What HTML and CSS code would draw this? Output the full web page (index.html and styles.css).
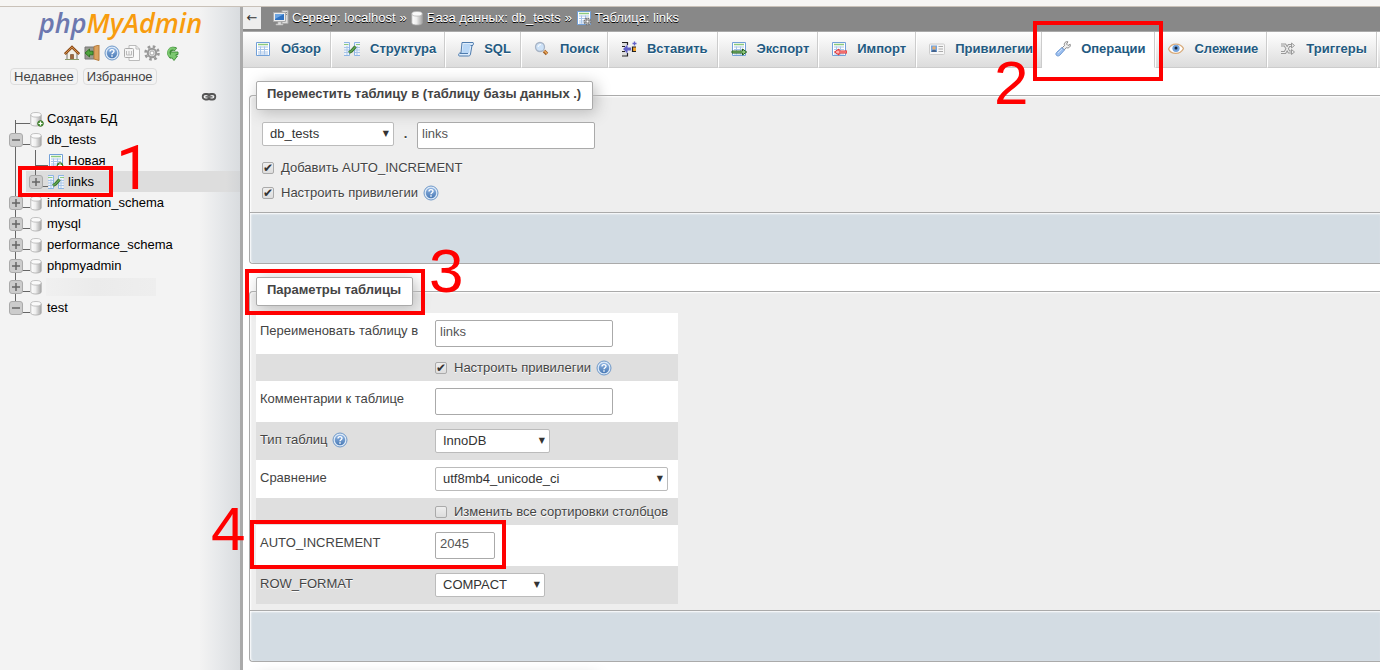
FILE: index.html
```html
<!DOCTYPE html>
<html lang="ru">
<head>
<meta charset="utf-8">
<title>phpMyAdmin</title>
<link rel="stylesheet" href="styles.css">
</head>
<body>
<svg class="sprite" aria-hidden="true">
  <defs>
    <linearGradient id="cyl" x1="0" x2="1"><stop offset="0" stop-color="#fff"/><stop offset=".45" stop-color="#eee"/><stop offset="1" stop-color="#a5a5a5"/></linearGradient>
    <linearGradient id="blue" x1="0" y1="0" x2="0" y2="1"><stop offset="0" stop-color="#8fb4e2"/><stop offset="1" stop-color="#4a7ab5"/></linearGradient>
  </defs>
  <symbol id="home" viewBox="0 0 16 16"><path d="M3 8v6.500h10V8L8 3z" fill="#f2efe6" stroke="#77756c"/><path d="M.8 9 8 2l7.200 7" fill="none" stroke="#8c4b16" stroke-width="2.600"/><path d="M1.300 8.700 8 2.200l6.700 6.500" fill="none" stroke="#d9934e" stroke-width="1"/><path d="M6.500 9.500h3v5h-3z" fill="#a0683a" stroke="#6d4423" stroke-width=".6"/><path d="M1 14.500h14" stroke="#8a9a6b"/></symbol>
  <symbol id="exit" viewBox="0 0 16 16"><path d="M1 2h9v12H1z" fill="#9a9a92" stroke="#777"/><path d="M10 1.500 15 0v15.500l-5-1.500z" fill="#dca25f" stroke="#b67c3e"/><path d="M9 6.200H5.500V4L1 8l4.500 4V9.800H9z" fill="#4ea43c" stroke="#236b18" stroke-width=".8"/></symbol>
  <symbol id="help" viewBox="0 0 16 16"><circle cx="8" cy="8" r="7" fill="#dbe8f6" stroke="#6f98c8"/><circle cx="8" cy="8" r="5.200" fill="url(#blue)"/><path d="M6 6.500C6 4 10 4 10 6.300 10 7.800 8 7.700 8 9.300M8 10.300v1.500" fill="none" stroke="#fff" stroke-width="1.400"/></symbol>
  <symbol id="docs" viewBox="0 0 16 16"><path d="M5 .5h7l3.500 3.500v11.500H5z" fill="#fafafa" stroke="#bbb"/><path d="M12 .5v3.500h3.500" fill="none" stroke="#bbb"/><rect x=".5" y="3.500" width="9" height="9" rx="1" fill="#f4f4f4" stroke="#aaa"/><path d="M2.500 6v4h5V6M5 6v4" stroke="#bbb" fill="none"/></symbol>
  <symbol id="gear" viewBox="0 0 16 16"><circle cx="8" cy="8" r="6.500" fill="none" stroke="#999" stroke-width="2.600" stroke-dasharray="2.600 2.500"/><circle cx="8" cy="8" r="4.200" fill="#ddd" stroke="#999" stroke-width="2"/><circle cx="8" cy="8" r="2" fill="#fff" stroke="#aaa"/></symbol>
  <symbol id="reload" viewBox="0 0 16 16"><path d="M12 4.500A4.300 4.300 0 1 0 8 12" fill="none" stroke="#3d8b37" stroke-width="4"/><path d="M6.500 7h7.500v2.500h-2v1.500h1.500L10 15.500 6.500 11z" fill="#7cc870" stroke="#3d8b37" stroke-width=".9"/><path d="M11.500 4.500A4.200 4.200 0 1 0 8 11.700" fill="none" stroke="#7cc870" stroke-width="2.200"/></symbol>
  <symbol id="chain" viewBox="0 0 16 16"><rect x="1.700" y="5" width="7" height="5.500" rx="2.700" fill="none" stroke="#555" stroke-width="1.800"/><rect x="7.300" y="5" width="7" height="5.500" rx="2.700" fill="none" stroke="#555" stroke-width="1.800"/><path d="M4.500 7.700h7" stroke="#777" stroke-width="1.800"/></symbol>
  <symbol id="db" viewBox="0 0 16 16"><path d="M.8 4v9c0 2.700 10.400 2.700 10.400 0V4z" fill="url(#cyl)" stroke="#aaa" stroke-width=".8"/><ellipse cx="6" cy="3.800" rx="5.200" ry="2.300" fill="#fafafa" stroke="#b5b5b5" stroke-width=".8"/></symbol>
  <symbol id="dbnew" viewBox="0 0 16 16"><use href="#db" width="16" height="16"/><circle cx="10.500" cy="12.500" r="2.800" fill="#4f9a3b" stroke="#397327"/><path d="M8.500 12.500h4m-2-2v4" stroke="#fff" stroke-width="1.200"/></symbol>
  <symbol id="table" viewBox="0 0 16 16"><path d="M1.500 1.500h13v13h-13z" fill="#fff" stroke="#72a0d8"/><path d="M3 3.500h10" stroke="#8cc97c" stroke-width="1.500"/><path d="M3 6h10M3 8.500h10M3 11h10M3 13h10M5.500 5.500v8M9.500 5.500v8" stroke="#a9c5e8"/></symbol>
  <symbol id="tablenew" viewBox="0 0 16 16"><use href="#table" width="16" height="16"/><circle cx="12" cy="12.500" r="2.800" fill="#4f9a3b" stroke="#397327"/><path d="M10 12.500h4m-2-2v4" stroke="#fff" stroke-width="1.200"/></symbol>
  <symbol id="tablegear" viewBox="0 0 16 16"><use href="#table" width="16" height="16"/><circle cx="11.500" cy="11.500" r="3" fill="#eee" stroke="#777" stroke-width="2" stroke-dasharray="1.600 .7"/><circle cx="11.500" cy="11.500" r="1.500" fill="#fff" stroke="#777"/></symbol>
  <symbol id="struct" viewBox="0 0 16 16"><path d="M.5 1.500h5v13h-5zM10.500 1.500h5v13h-5z" fill="#eef4fc"/><path d="M0 1.500h5.500v13H0M16 1.500h-5.500v13H16" fill="none" stroke="#8db4e4"/><path d="M0 3.500h4.500M12 3.500h4" stroke="#8cc97c"/><path d="M0 6.500h5M0 9h5M0 11.500h5M11 6.500h5M11 9h5M11 11.500h5M3 5v9M13 5v9" stroke="#a9c5e8"/><path d="m5 11.500 2.500-1.500 4-4.500" fill="none" stroke="#2f6c2a" stroke-width="3.200"/><path d="m5 11.500 2.500-1.500 4-4.500" fill="none" stroke="#64a650" stroke-width="1.500"/></symbol>
  <symbol id="server" viewBox="0 0 16 16"><path d="M9 .5h6v13H9z" fill="#ddd" stroke="#aaa"/><path d="M11 2.500h3M11 4.500h3" stroke="#888"/><path d="M.5 2.500h12v9H.5z" fill="#eee" stroke="#aaa"/><path d="M2 4h9v6H2z" fill="#2f72c2"/><path d="M2 4h9L2 9z" fill="#6da5e2"/><path d="M5 12h3v2h2v1H3v-1h2z" fill="#ddd" stroke="#bbb" stroke-width=".6"/></symbol>
  <symbol id="sql" viewBox="0 0 16 16"><path d="M4 1.500h11c.8 0 .8 3-1 3L12.500 13c-.2 1.500-1 2-2 2H1.300c-1.200 0-.8-3 .7-3h1z" fill="#ddecfb" stroke="#4f7cae"/><path d="M5.500 3h7L11 12H4z" fill="#b9d7f6"/><path d="M12.500 4.500H15M2 12.500h8" stroke="#4f7cae"/></symbol>
  <symbol id="search" viewBox="0 0 16 16"><path d="m10 10 3 3" stroke="#a06026" stroke-width="3.500"/><path d="m10.500 10 2.500 2.500" stroke="#eda95b" stroke-width="1.500"/><circle cx="6" cy="6" r="4.500" fill="#cde2f8" stroke="#a8b4c5" stroke-width="1.300"/><path d="M4 6a3 3 0 0 1 3-2.500" fill="none" stroke="#fff"/></symbol>
  <symbol id="insert" viewBox="0 0 16 16"><path d="M1 1h5v4H1zM1 10.500h5v4H1z" fill="#ddd"/><path d="M1 1.500h5.500V4M1 5.500h3M1 10.500h3M6.500 12v3H1" fill="none" stroke="#222" stroke-width="1.200"/><path d="M2 8 6.500 3.500v3H10v3H6.500v3z" fill="#6262c8"/><path d="M11.500 6h3.500v4h-3.500z" fill="#f5a52b"/><path d="M15 6h-3.500v4.500H15" fill="none" stroke="#222" stroke-width="1.200"/><path d="M13.500.5v4m-2-2h4" stroke="#6262c8" stroke-width="1.300"/></symbol>
  <symbol id="export" viewBox="0 0 16 16"><use href="#table" width="16" height="16"/><path d="M1 10h10.500V8l4.200 3-4.200 3v-2H1z" fill="#8fca7f" stroke="#245f1d" stroke-width="1"/></symbol>
  <symbol id="import" viewBox="0 0 16 16"><use href="#table" width="16" height="16"/><path d="M16 10H8V8l-4.500 3L8 14v-2h8z" fill="#ffb0b0" stroke="#e22b2b" stroke-width="1"/></symbol>
  <symbol id="rights" viewBox="0 0 16 16"><rect x=".5" y="3" width="15" height="10.500" rx="1" fill="#f7f7f7" stroke="#ccc"/><path d="M2 4.500h6V11H2z" fill="#74a5de"/><circle cx="5" cy="7" r="1.800" fill="#e4ae74"/><path d="M2.500 11c0-3 5-3 5 0" fill="#44628a"/><path d="M9.500 5.500h4.500M9.500 8h4.500M9.500 10.500h4.500" stroke="#aaa"/></symbol>
  <symbol id="wrench" viewBox="0 0 16 16"><path d="m7 7 2.500-2.500C8.500 2 11 0 13 .8L11.500 3l1.500 1.500 2.200-1.200c.8 2.200-1.500 4.300-3.700 3.400L9 9z" fill="#eee" stroke="#888"/><path d="m7 6.500 2.500 2.500-5 5.500C2 16-.2 13.500 1.500 11.500z" fill="#9cc0f0" stroke="#6f99d2"/><path d="m3 12 4-4" stroke="#cfe1fa"/></symbol>
  <symbol id="eye" viewBox="0 0 16 16"><path d="M.5 8C3.500 1.500 12 1.500 15.500 7.500 12 14 3.500 14 .5 8z" fill="#fff" stroke="#d9ac7c" stroke-width="1.300"/><circle cx="8" cy="7.300" r="3.600" fill="#73a3dc"/><circle cx="8" cy="7" r="1.500" fill="#182638"/></symbol>
  <symbol id="trigger" viewBox="0 0 16 16"><path d="M1 4h4l4 7h3M1 11.500h4L9 4.500h3" fill="none" stroke="#999" stroke-width="3.200"/><path d="M1 4h4l4 7h3M1 11.500h4L9 4.500h3" fill="none" stroke="#eee" stroke-width="1.200"/><path d="m11.500 2 3 2.500-3 2.500zm0 6.500 3 2.500-3 2.500z" fill="#eee" stroke="#999"/></symbol>
  <symbol id="box" viewBox="0 0 14 14"><rect x=".5" y=".5" width="13" height="13" rx="2.500" fill="#ccc" stroke="#aaa"/><path d="M3 7h8" stroke="#666" stroke-width="1.500"/></symbol>
  <symbol id="br-start" viewBox="0 0 21 21"><path d="M6.500 12v9M6.500 15.500H21" fill="none" stroke="#666"/></symbol>
  <symbol id="br-line" viewBox="0 0 21 21"><path d="M6.500 0v21" stroke="#666"/></symbol>
  <symbol id="br-item" viewBox="0 0 21 21"><path d="M6.500 0v21M6.500 15.500H20" fill="none" stroke="#666"/></symbol>
  <symbol id="br-minus" viewBox="0 0 21 21"><path d="M6.500 0v21M13 15.500h8" stroke="#666"/><use href="#box" y="4" width="14" height="14"/></symbol>
  <symbol id="br-plus" viewBox="0 0 21 21"><use href="#br-minus" width="21" height="21"/><path d="M7 7v8" stroke="#666" stroke-width="1.500"/></symbol>
  <symbol id="br-pluslast" viewBox="0 0 21 21"><path d="M6.500 0v8M13 15.500h8" stroke="#666"/><use href="#box" y="4" width="14" height="14"/><path d="M7 7v8" stroke="#666" stroke-width="1.500"/></symbol>
  <symbol id="br-last" viewBox="0 0 21 21"><path d="M6.500 0v8M13 15.500h8" stroke="#666"/><use href="#box" y="4" width="14" height="14"/></symbol>
</svg>

<div class="topstrip"></div>
<div class="app">
  <nav class="nav">
    <div class="logo"><span class="logo-php">php</span><span class="logo-my">MyAdmin</span></div>
    <div class="tools">
      <a href="#" aria-label="Домой"><svg class="icon"><use href="#home"/></svg></a>
      <a href="#" aria-label="Выход"><svg class="icon"><use href="#exit"/></svg></a>
      <a href="#" aria-label="Справка"><svg class="icon"><use href="#help"/></svg></a>
      <a href="#" aria-label="Документация"><svg class="icon"><use href="#docs"/></svg></a>
      <a href="#" aria-label="Настройки"><svg class="icon"><use href="#gear"/></svg></a>
      <a href="#" aria-label="Обновить"><svg class="icon"><use href="#reload"/></svg></a>
    </div>
    <div class="quick"><button type="button">Недавнее</button><button type="button">Избранное</button></div>
    <div class="linker"><a href="#" aria-label="Связать с панелью"><svg class="icon"><use href="#chain"/></svg></a></div>
    <ul class="tree">
      <li><svg class="branch"><use href="#br-start"/></svg><svg class="icon"><use href="#dbnew"/></svg><a href="#">Создать БД</a></li>
      <li><svg class="branch"><use href="#br-minus"/></svg><svg class="icon"><use href="#db"/></svg><a href="#">db_tests</a></li>
      <li><svg class="trunk"><use href="#br-line" width="21" height="21"/></svg><div class="child"><svg class="branch"><use href="#br-item" width="21" height="21"/></svg><svg class="icon"><use href="#tablenew"/></svg><a href="#">Новая</a></div></li>
      <li><svg class="trunk"><use href="#br-line" width="21" height="21"/></svg><div class="child current"><svg class="branch"><use href="#br-pluslast" width="21" height="21"/></svg><svg class="icon"><use href="#struct"/></svg><a href="#">links</a></div></li>
      <li><svg class="branch"><use href="#br-plus"/></svg><svg class="icon"><use href="#db"/></svg><a href="#">information_schema</a></li>
      <li><svg class="branch"><use href="#br-plus"/></svg><svg class="icon"><use href="#db"/></svg><a href="#">mysql</a></li>
      <li><svg class="branch"><use href="#br-plus"/></svg><svg class="icon"><use href="#db"/></svg><a href="#">performance_schema</a></li>
      <li><svg class="branch"><use href="#br-plus"/></svg><svg class="icon"><use href="#db"/></svg><a href="#">phpmyadmin</a></li>
      <li><svg class="branch"><use href="#br-plus"/></svg><svg class="icon"><use href="#db"/></svg><span class="hidden-name"></span></li>
      <li><svg class="branch"><use href="#br-last"/></svg><svg class="icon"><use href="#db"/></svg><a href="#">test</a></li>
    </ul>
  </nav>

  <main class="main">
    <div class="crumbs">
      <button type="button" class="back" aria-label="Скрыть панель">←</button>
      <svg class="icon"><use href="#server"/></svg><a href="#">Сервер: localhost</a><span class="sep">»</span>
      <svg class="icon crumb-db"><use href="#db" width="16" height="16"/></svg><a href="#">База данных: db_tests</a><span class="sep">»</span>
      <svg class="icon"><use href="#tablegear"/></svg><a href="#">Таблица: links</a>
    </div>
    <div class="tabs">
      <a href="#" class="tab"><svg class="icon"><use href="#table"/></svg>Обзор</a>
      <a href="#" class="tab"><svg class="icon"><use href="#struct"/></svg>Структура</a>
      <a href="#" class="tab"><svg class="icon"><use href="#sql"/></svg>SQL</a>
      <a href="#" class="tab"><svg class="icon"><use href="#search"/></svg>Поиск</a>
      <a href="#" class="tab"><svg class="icon"><use href="#insert"/></svg>Вставить</a>
      <a href="#" class="tab"><svg class="icon"><use href="#export"/></svg>Экспорт</a>
      <a href="#" class="tab"><svg class="icon"><use href="#import"/></svg>Импорт</a>
      <a href="#" class="tab"><svg class="icon"><use href="#rights"/></svg>Привилегии</a>
      <a href="#" class="tab active"><svg class="icon"><use href="#wrench"/></svg>Операции</a>
      <a href="#" class="tab"><svg class="icon"><use href="#eye"/></svg>Слежение</a>
      <a href="#" class="tab"><svg class="icon"><use href="#trigger"/></svg>Триггеры</a>
      <span class="tab-rest"></span>
    </div>

    <form>
      <fieldset class="panel">
        <legend>Переместить таблицу в (таблицу базы данных .)</legend>
        <div class="move">
          <div class="move-row">
            <span class="pick pick-db"><select aria-label="База данных"><option>db_tests</option></select></span>
            <b class="dot">.</b>
            <input type="text" class="text" value="links" aria-label="Таблица">
          </div>
          <div class="check-row"><input type="checkbox" id="ai" checked><label for="ai">Добавить AUTO_INCREMENT</label></div>
          <div class="check-row"><input type="checkbox" id="pr" checked><label for="pr">Настроить привилегии</label><svg class="icon"><use href="#help"/></svg></div>
        </div>
        <div class="panel-foot"></div>
      </fieldset>
    </form>

    <form>
      <fieldset class="panel">
        <legend>Параметры таблицы</legend>
        <table class="options">
          <tr><td><label for="name">Переименовать таблицу в</label></td><td><input type="text" class="text" id="name" value="links"></td></tr>
          <tr><td></td><td><div class="check-cell"><input type="checkbox" id="pr2" checked><label for="pr2">Настроить привилегии</label><svg class="icon"><use href="#help"/></svg></div></td></tr>
          <tr><td><label for="comment">Комментарии к таблице</label></td><td><input type="text" class="text" id="comment"></td></tr>
          <tr><td><div class="label-help"><label for="engine">Тип таблиц</label><svg class="icon"><use href="#help"/></svg></div></td><td><span class="pick pick-engine"><select id="engine"><option>InnoDB</option></select></span></td></tr>
          <tr><td><label for="coll">Сравнение</label></td><td><span class="pick pick-coll"><select id="coll"><option>utf8mb4_unicode_ci</option></select></span></td></tr>
          <tr><td></td><td><div class="check-cell"><input type="checkbox" id="cols"><label for="cols">Изменить все сортировки столбцов</label></div></td></tr>
          <tr><td><label for="inc">AUTO_INCREMENT</label></td><td><input type="text" class="text short" id="inc" value="2045"></td></tr>
          <tr><td><label for="fmt">ROW_FORMAT</label></td><td><span class="pick pick-format"><select id="fmt"><option>COMPACT</option></select></span></td></tr>
        </table>
        <div class="panel-foot"></div>
      </fieldset>
    </form>
    <div class="next-legend"></div>
  </main>
</div>

<div class="mark mark-1"></div><span class="digit digit-1">1</span>
<div class="mark mark-2"></div><span class="digit digit-2">2</span>
<div class="mark mark-3"></div><span class="digit digit-3">3</span>
<div class="mark mark-4"></div><span class="digit digit-4">4</span>
</body>
</html>
```

FILE: styles.css
```css
* { box-sizing: border-box; }
body {
  margin: 0;
  height: 100vh;
  display: flex;
  flex-direction: column;
  overflow: hidden;
  position: relative;
  background: #fff;
  color: #444;
  font: 13px/16px "Liberation Sans", Arial, sans-serif;
}
a { color: inherit; text-decoration: none; }
button, input, select { font: inherit; color: inherit; margin: 0; }
.sprite { position: absolute; width: 0; height: 0; }
.icon { width: 16px; height: 16px; flex: none; display: block; }
.topstrip { flex: none; height: 7px; background: #f6f5f3; border-bottom: 1px solid #c9c1b8; }
.app { flex: 1; min-height: 0; display: flex; }

/* navigation */
.nav {
  flex: none;
  width: 243px;
  border-right: 3px solid #aaa;
  background: linear-gradient(to right, #f3f3f3 200px, #e6e8ea 220px, #d9dcdf 240px);
}
.logo {
  padding: 1px 0 0 39px;
  font: italic 600 27px/30px "Open Sans", "Noto Sans", sans-serif;
}
.logo-php { color: #6c78af; }
.logo-my { color: #f89c0e; }
.tools { display: flex; gap: 4px; padding: 7px 0 0 64px; }
.quick { display: flex; gap: 5px; padding: 7px 0 0 10px; }
.quick button {
  padding: 0 3px;
  height: 17px;
  line-height: 14px;
  background: #f3f3f3;
  border: 1px solid #ddd;
  border-radius: 4px;
}
.linker { display: flex; justify-content: flex-end; padding: 4px 23px 0 0; }
.tree { list-style: none; margin: 0; padding: 3px 0 0 9px; color: #000; }
.tree li { display: flex; align-items: center; height: 21px; }
.tree a { padding-left: 1px; white-space: nowrap; }
.branch { flex: none; width: 21px; height: 21px; }
.trunk { flex: none; width: 17px; height: 21px; }
.child { flex: 1; display: flex; align-items: center; height: 21px; padding-left: 3px; }
.child .branch { width: 19px; }
.child a { padding-left: 4px; }
.current { background: linear-gradient(to right, #ddd 200px, #d3d5d7); }
.hidden-name { width: 110px; height: 18px; background: linear-gradient(to right, #f0f0f0, #ebebeb 50px, #eee); }

/* main column */
.main { flex: 1; min-width: 0; overflow: hidden; }
.crumbs {
  display: flex;
  align-items: center;
  height: 25px;
  padding-bottom: 2px;
  background: #888;
  border-bottom: 1px solid #aaa;
  color: #fff;
  text-shadow: 0 1px 0 #000;
}
.back {
  width: 18px;
  height: 22px;
  margin-right: 12px;
  padding: 0;
  border: 0;
  background: #eee;
  color: #333;
  font-family: "DejaVu Sans", sans-serif;
}
.crumbs a { padding-left: 3px; }
.sep { padding: 0 4px; }
.crumb-db { width: 13px; }
.tabs { display: flex; height: 36px; overflow: hidden; }
.tab {
  flex: none;
  display: flex;
  align-items: center;
  gap: 10px;
  padding: 0 9px 2px 12px;
  border-left: 1px solid #fff;
  border-right: 1px solid #ccc;
  border-bottom: 1px solid #ccc;
  background: linear-gradient(#fff, #dcdcdc);
  color: #235a81;
  font-weight: bold;
  text-shadow: 0 1px 0 #fff;
}
.tab:nth-child(even) { padding-right: 8px; }
.tab:first-child { border-left: 0; }
.tab.active { background: #fff; border-bottom-color: #fff; }
.tab-rest { flex: 1; border-left: 1px solid #fff; border-bottom: 1px solid #ccc; background: linear-gradient(#fff, #dcdcdc); }

.panel {
  min-width: 0;
  margin: 13px 0 0 6px;
  padding: 0;
  border: 1px solid #aaa;
  border-right: 0;
  border-radius: 4px 0 0 4px;
  background: #eee;
  box-shadow: inset 1px 1px 2px #fff;
  text-shadow: 0 1px 0 #fff;
}
.panel legend {
  height: 29px;
  margin-left: 6px;
  padding: 4px 11px 5px 10px;
  border: 1px solid #aaa;
  border-radius: 2px;
  background: #fff;
  box-shadow: 3px 3px 15px #bbb;
  font-weight: bold;
}
.move { padding: 12px 12px 7px; }
.move-row { display: flex; align-items: flex-start; height: 33px; }
.dot { width: 23px; padding-top: 4px; text-align: center; }
.check-row { display: flex; align-items: center; height: 25px; }
.check-row .icon, .check-cell .icon, .label-help .icon { margin-left: 5px; }
label { white-space: nowrap; }

.text {
  display: block;
  width: 178px;
  height: 27px;
  padding: 0 4px 4px;
  background: #fff;
  border: 1px solid #aaa;
  border-radius: 2px;
  color: #555;
}
.short { width: 60px; }
.pick { display: block; position: relative; }
.pick::after {
  content: "▼";
  position: absolute;
  right: 5px;
  top: 4px;
  color: #333;
  font: 8px/16px "DejaVu Sans", sans-serif;
  pointer-events: none;
  text-shadow: none;
}
.pick select {
  appearance: none;
  display: block;
  width: 100%;
  height: 24px;
  padding: 0 18px 0 7px;
  background: #fff;
  border: 1px solid #bbb;
  border-radius: 2px;
  color: #333;
}
.pick-db { width: 132px; }
.pick-engine { width: 115px; }
.pick-coll { width: 233px; }
.pick-format { width: 110px; }

input[type="checkbox"] {
  appearance: none;
  flex: none;
  width: 12px;
  height: 12px;
  margin-right: 7px;
  border: 1px solid #aaa;
  border-radius: 2px;
  background: linear-gradient(#eee, #ddd);
}
input[type="checkbox"]:checked::before {
  content: "✔";
  display: block;
  color: #333;
  font: 12px/10px "DejaVu Sans", sans-serif;
}

.options { width: 422px; margin: 7px 0 6px 6px; border-collapse: collapse; }
.options tr:nth-child(odd) { background: #fff; }
.options tr:nth-child(even) { background: #dfdfdf; }
.options td { padding: 7px 4px; vertical-align: top; }
.options td:first-child { width: 175px; padding-top: 10px; padding-bottom: 0; }
.check-cell { display: flex; align-items: center; height: 13px; }
.label-help { display: flex; }

.panel-foot {
  height: 51px;
  border-top: 1px solid #aaa;
  border-radius: 0 0 0 4px;
  background: #d3dce3;
  box-shadow: inset 1px 1px 2px #fff;
}
.next-legend { width: 340px; height: 29px; margin: 13px 0 0 12px; box-shadow: 3px 3px 15px #bbb; }

/* annotations over the page */
.mark { position: absolute; border: 4px solid #f00; }
.mark-1 { left: 18px; top: 166px; width: 95px; height: 31px; }
.mark-2 { left: 1033px; top: 21px; width: 130px; height: 60px; }
.mark-3 { left: 245px; top: 269px; width: 180px; height: 46px; }
.mark-4 { left: 250px; top: 520px; width: 256px; height: 49px; }
.digit { position: absolute; color: #f00; font-size: 62px; line-height: 62px; }
.digit-1 { left: 116px; top: 137px; font-family: Roboto, sans-serif; }
.digit-2 { left: 994px; top: 52px; }
.digit-3 { left: 429px; top: 240px; }
.digit-4 { left: 211px; top: 498px; }
```
